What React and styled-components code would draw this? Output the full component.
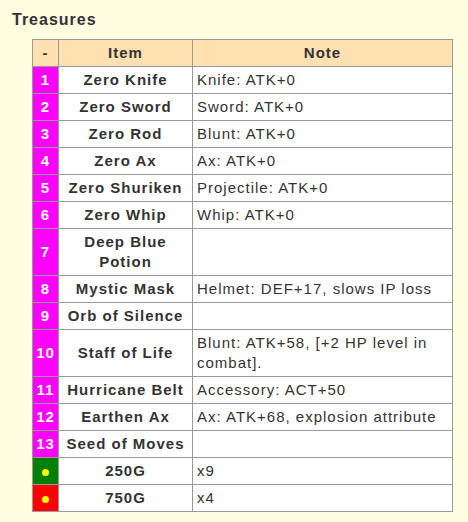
import React from 'react';
import styled, { createGlobalStyle } from 'styled-components';

const GlobalStyle = createGlobalStyle`
  html, body {
    margin: 0;
    padding: 0;
    background-color: #fffde0;
  }
`;

const rows = [
  { no: '1', item: 'Zero Knife', note: 'Knife: ATK+0' },
  { no: '2', item: 'Zero Sword', note: 'Sword: ATK+0' },
  { no: '3', item: 'Zero Rod', note: 'Blunt: ATK+0' },
  { no: '4', item: 'Zero Ax', note: 'Ax: ATK+0' },
  { no: '5', item: 'Zero Shuriken', note: 'Projectile: ATK+0' },
  { no: '6', item: 'Zero Whip', note: 'Whip: ATK+0' },
  { no: '7', item: 'Deep Blue Potion', note: '' },
  { no: '8', item: 'Mystic Mask', note: 'Helmet: DEF+17, slows IP loss' },
  { no: '9', item: 'Orb of Silence', note: '' },
  { no: '10', item: 'Staff of Life', note: 'Blunt: ATK+58, [+2 HP level in combat].' },
  { no: '11', item: 'Hurricane Belt', note: 'Accessory: ACT+50' },
  { no: '12', item: 'Earthen Ax', note: 'Ax: ATK+68, explosion attribute' },
  { no: '13', item: 'Seed of Moves', note: '' },
  { dot: '#008000', item: '250G', note: 'x9' },
  { dot: '#ff0000', item: '750G', note: 'x4' },
];

const Page = styled.div`
  padding: 10px 12px;
  font-family: "Liberation Sans", Arial, sans-serif;
  color: #333333;
  letter-spacing: 1px;
`;

const Title = styled.div`
  font-size: 16px;
  line-height: 20px;
  font-weight: 700;
`;

const Table = styled.table`
  margin: 9px 0 0 20px;
  width: 420px;
  border-collapse: collapse;
  table-layout: fixed;
  background-color: #ffffff;
  font-size: 15px;
  line-height: 20px;
`;

const Col = styled.col`
  width: ${p => p.w};
`;

const HeadCell = styled.th`
  background-color: #ffe0b0;
  border: 1px solid #999999;
  padding: 3px 4px;
  font-weight: 700;
  text-align: center;
`;

const NumCell = styled.td`
  background-color: ${p => p.bg || '#ff00ff'};
  color: #ffffff;
  border: 1px solid #999999;
  padding: 3px 0;
  font-weight: 700;
  text-align: center;
`;

const ItemCell = styled.td`
  border: 1px solid #999999;
  padding: 3px 4px;
  font-weight: 700;
  text-align: center;
`;

const NoteCell = styled.td`
  border: 1px solid #999999;
  padding: 3px 4px;
  text-align: left;
`;

const Dot = styled.span`
  display: inline-block;
  width: 7px;
  height: 7px;
  border-radius: 50%;
  background-color: #ffff00;
  vertical-align: middle;
`;

export default function App() {
  return (
    <Page>
      <GlobalStyle />
      <Title>Treasures</Title>
      <Table>
        <colgroup>
          <Col w="26px" />
          <Col w="134px" />
          <Col w="260px" />
        </colgroup>
        <thead>
          <tr>
            <HeadCell>-</HeadCell>
            <HeadCell>Item</HeadCell>
            <HeadCell>Note</HeadCell>
          </tr>
        </thead>
        <tbody>
          {rows.map((r, i) => (
            <tr key={i}>
              <NumCell bg={r.dot}>{r.dot ? <Dot /> : r.no}</NumCell>
              <ItemCell>{r.item}</ItemCell>
              <NoteCell>{r.note}</NoteCell>
            </tr>
          ))}
        </tbody>
      </Table>
    </Page>
  );
}
